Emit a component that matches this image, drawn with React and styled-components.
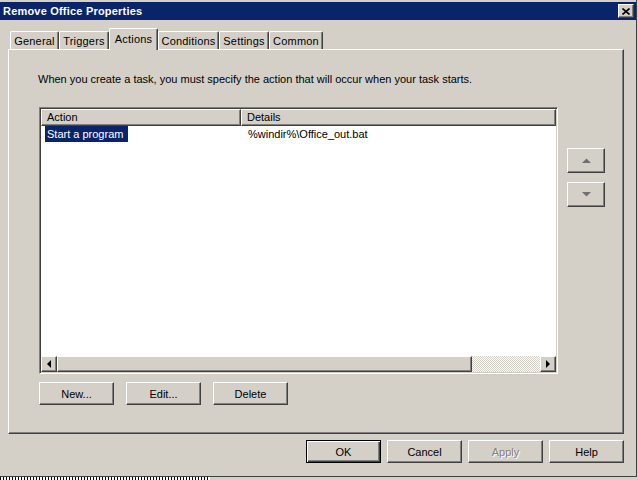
import React from 'react';
import styled, { createGlobalStyle, css } from 'styled-components';

const tabs = [
  { label: 'General', width: 49 },
  { label: 'Triggers', width: 50 },
  { label: 'Actions', width: 49, active: true },
  { label: 'Conditions', width: 61 },
  { label: 'Settings', width: 50 },
  { label: 'Common', width: 54 },
];

const Arrow = ({ dir, color = '#000' }) => {
  const shapes = {
    left: 'M4 0 L4 8 L0 4 Z',
    right: 'M0 0 L0 8 L4 4 Z',
    up: 'M0 5 L9 5 L4.5 0.5 Z',
    down: 'M0 0 L9 0 L4.5 4.5 Z',
  };
  const horiz = dir === 'left' || dir === 'right';
  return (
    <svg width={horiz ? 4 : 9} height={horiz ? 8 : 5} viewBox={horiz ? '0 0 4 8' : '0 0 9 5'}>
      <path d={shapes[dir]} fill={color} />
    </svg>
  );
};

const App = () => {
  return (
    <>
      <GlobalStyle />
      <Window>
        <TitleBar>
          <Title>Remove Office Properties</Title>
          <CloseButton>
            <svg width="8" height="7" viewBox="0 0 8 7">
              <path d="M0.5 0.5 L7.5 6.5 M7.5 0.5 L0.5 6.5" stroke="#000" strokeWidth="1.6" />
            </svg>
          </CloseButton>
        </TitleBar>

        <Body>
          <TabStrip>
            {tabs.map(t => (
              <Tab key={t.label} width={t.width} active={t.active}>{t.label}</Tab>
            ))}
          </TabStrip>

          <Panel>
            <Description>
              When you create a task, you must specify the action that will occur when your task starts.
            </Description>
            <MainRow>
              <ListArea>
                <ListView>
                  <Header>
                    <HeaderCell width={200}>Action</HeaderCell>
                    <HeaderCell>Details</HeaderCell>
                  </Header>
                  <Row>
                    <Cell width={200} pad={4}><Selected>Start a program</Selected></Cell>
                    <Cell pad={7}>%windir%\Office_out.bat</Cell>
                  </Row>
                  <Filler />
                  <HScroll>
                    <ScrollButton><Arrow dir="left" /></ScrollButton>
                    <Thumb />
                    <Track />
                    <ScrollButton><Arrow dir="right" /></ScrollButton>
                  </HScroll>
                </ListView>
                <ButtonRow>
                  <Button>New...</Button>
                  <Button>Edit...</Button>
                  <Button>Delete</Button>
                </ButtonRow>
              </ListArea>
              <SideButtons>
                <MoveButton><Arrow dir="up" color="#707070" /></MoveButton>
                <MoveButton><Arrow dir="down" color="#707070" /></MoveButton>
              </SideButtons>
            </MainRow>
          </Panel>

          <DialogButtons>
            <Button isDefault>OK</Button>
            <Button>Cancel</Button>
            <Button disabled>Apply</Button>
            <Button>Help</Button>
          </DialogButtons>
        </Body>
      </Window>
      <BehindStrip>
        <BehindText />
      </BehindStrip>
    </>
  );
};

export default App;

//style

const GlobalStyle = createGlobalStyle`
  html, body {
    margin: 0;
    padding: 0;
    background: #d4d0c8;
  }
  body {
    font-family: "Liberation Sans", Arial, sans-serif;
    font-size: 11px;
    color: #000;
    overflow: hidden;
  }
`;

const raised = css`
  border: 1px solid;
  border-color: #fff #404040 #404040 #fff;
  box-shadow: inset -1px -1px #808080;
`;

const Window = styled.div`
  width: 637px;
  height: 477px;
  box-sizing: border-box;
  padding-top: 2px;
  background: #d4d0c8;
  border-right: 1px solid #404040;
  border-bottom: 1px solid #404040;
  display: flex;
  flex-direction: column;
`;

const TitleBar = styled.div`
  height: 18px;
  background: #0a246a;
  display: flex;
  align-items: center;
  justify-content: space-between;
  padding: 0 2px 0 3px;
`;

const Title = styled.span`
  color: #fff;
  font-weight: bold;
  font-size: 11px;
  letter-spacing: 0.2px;
`;

const CloseButton = styled.div`
  ${raised}
  width: 16px;
  height: 14px;
  box-sizing: border-box;
  background: #d4d0c8;
  display: flex;
  align-items: center;
  justify-content: center;
`;

const Body = styled.div`
  padding-left: 8px;
  display: flex;
  flex-direction: column;
`;

const TabStrip = styled.div`
  position: relative;
  z-index: 1;
  display: flex;
  align-items: flex-end;
  height: 22px;
  margin: 8px 0 -1px 2px;
`;

const Tab = styled.div`
  width: ${p => p.width}px;
  height: ${p => (p.active ? 22 : 18)}px;
  margin-bottom: ${p => (p.active ? 0 : 1)}px;
  box-sizing: border-box;
  background: #d4d0c8;
  border-top: 1px solid #fff;
  border-left: 1px solid #fff;
  border-right: 1px solid #404040;
  border-top-left-radius: 2px;
  border-top-right-radius: 2px;
  box-shadow: inset -1px 0 #808080;
  display: flex;
  align-items: center;
  justify-content: center;
  padding-bottom: ${p => (p.active ? 2 : 0)}px;
  letter-spacing: 0.2px;
`;

const Panel = styled.div`
  width: 616px;
  height: 385px;
  box-sizing: border-box;
  border: 1px solid;
  border-color: #fff #404040 #404040 #fff;
  box-shadow: inset -1px -1px #808080;
  padding: 23px 0 0 30px;
`;

const Description = styled.div`
  line-height: 13px;
  margin-left: -1px;
`;

const MainRow = styled.div`
  display: flex;
  margin-top: 21px;
`;

const ListArea = styled.div`
  display: flex;
  flex-direction: column;
`;

const ListView = styled.div`
  width: 519px;
  height: 267px;
  box-sizing: border-box;
  padding: 1px;
  background: #fff;
  border: 1px solid;
  border-color: #808080 #fff #fff #808080;
  box-shadow: inset 1px 1px #404040, inset -1px -1px #d4d0c8;
  display: flex;
  flex-direction: column;
`;

const Header = styled.div`
  display: flex;
  height: 17px;
  flex-shrink: 0;
`;

const HeaderCell = styled.div`
  ${raised}
  box-sizing: border-box;
  background: #d4d0c8;
  ${p => (p.width ? `width: ${p.width}px;` : 'flex: 1;')}
  padding-left: 5px;
  line-height: 15px;
`;

const Row = styled.div`
  display: flex;
  height: 16px;
  align-items: center;
`;

const Cell = styled.div`
  box-sizing: border-box;
  ${p => (p.width ? `width: ${p.width}px;` : 'flex: 1;')}
  padding-left: ${p => p.pad}px;
`;

const Selected = styled.span`
  display: inline-block;
  background: #0a246a;
  color: #fff;
  line-height: 16px;
  padding: 0 5px 0 2px;
`;

const Filler = styled.div`
  flex: 1;
`;

const HScroll = styled.div`
  display: flex;
  height: 16px;
  flex-shrink: 0;
`;

const ScrollButton = styled.div`
  ${raised}
  width: 16px;
  box-sizing: border-box;
  background: #d4d0c8;
  display: flex;
  align-items: center;
  justify-content: center;
`;

const Thumb = styled.div`
  ${raised}
  width: 415px;
  box-sizing: border-box;
  background: #d4d0c8;
`;

const Track = styled.div`
  flex: 1;
  background: repeating-conic-gradient(#fff 0 25%, #d4d0c8 0 50%) 0 0 / 2px 2px;
`;

const ButtonRow = styled.div`
  display: flex;
  gap: 12px;
  margin-top: 8px;
`;

const Button = styled.div`
  width: 75px;
  height: 23px;
  box-sizing: border-box;
  background: #d4d0c8;
  display: flex;
  align-items: center;
  justify-content: center;
  ${p =>
    p.isDefault
      ? css`
          border: 1px solid #000;
          box-shadow: inset 1px 1px #fff, inset -1px -1px #404040, inset -2px -2px #808080;
        `
      : raised}
  color: ${p => (p.disabled ? '#808080' : '#000')};
  text-shadow: ${p => (p.disabled ? '1px 1px #fff' : 'none')};
`;

const SideButtons = styled.div`
  display: flex;
  flex-direction: column;
  gap: 9px;
  margin-left: 9px;
  padding-top: 41px;
`;

const MoveButton = styled.div`
  ${raised}
  width: 38px;
  height: 25px;
  box-sizing: border-box;
  display: flex;
  align-items: center;
  justify-content: center;
`;

const DialogButtons = styled.div`
  width: 616px;
  display: flex;
  justify-content: flex-end;
  gap: 6px;
  margin-top: 6px;
`;

const BehindStrip = styled.div`
  height: 3px;
  display: flex;
  background: #d4d0c8;
`;

const BehindText = styled.div`
  width: 210px;
  background: repeating-linear-gradient(90deg, #000 0 1px, #fff 1px 3px);
`;
